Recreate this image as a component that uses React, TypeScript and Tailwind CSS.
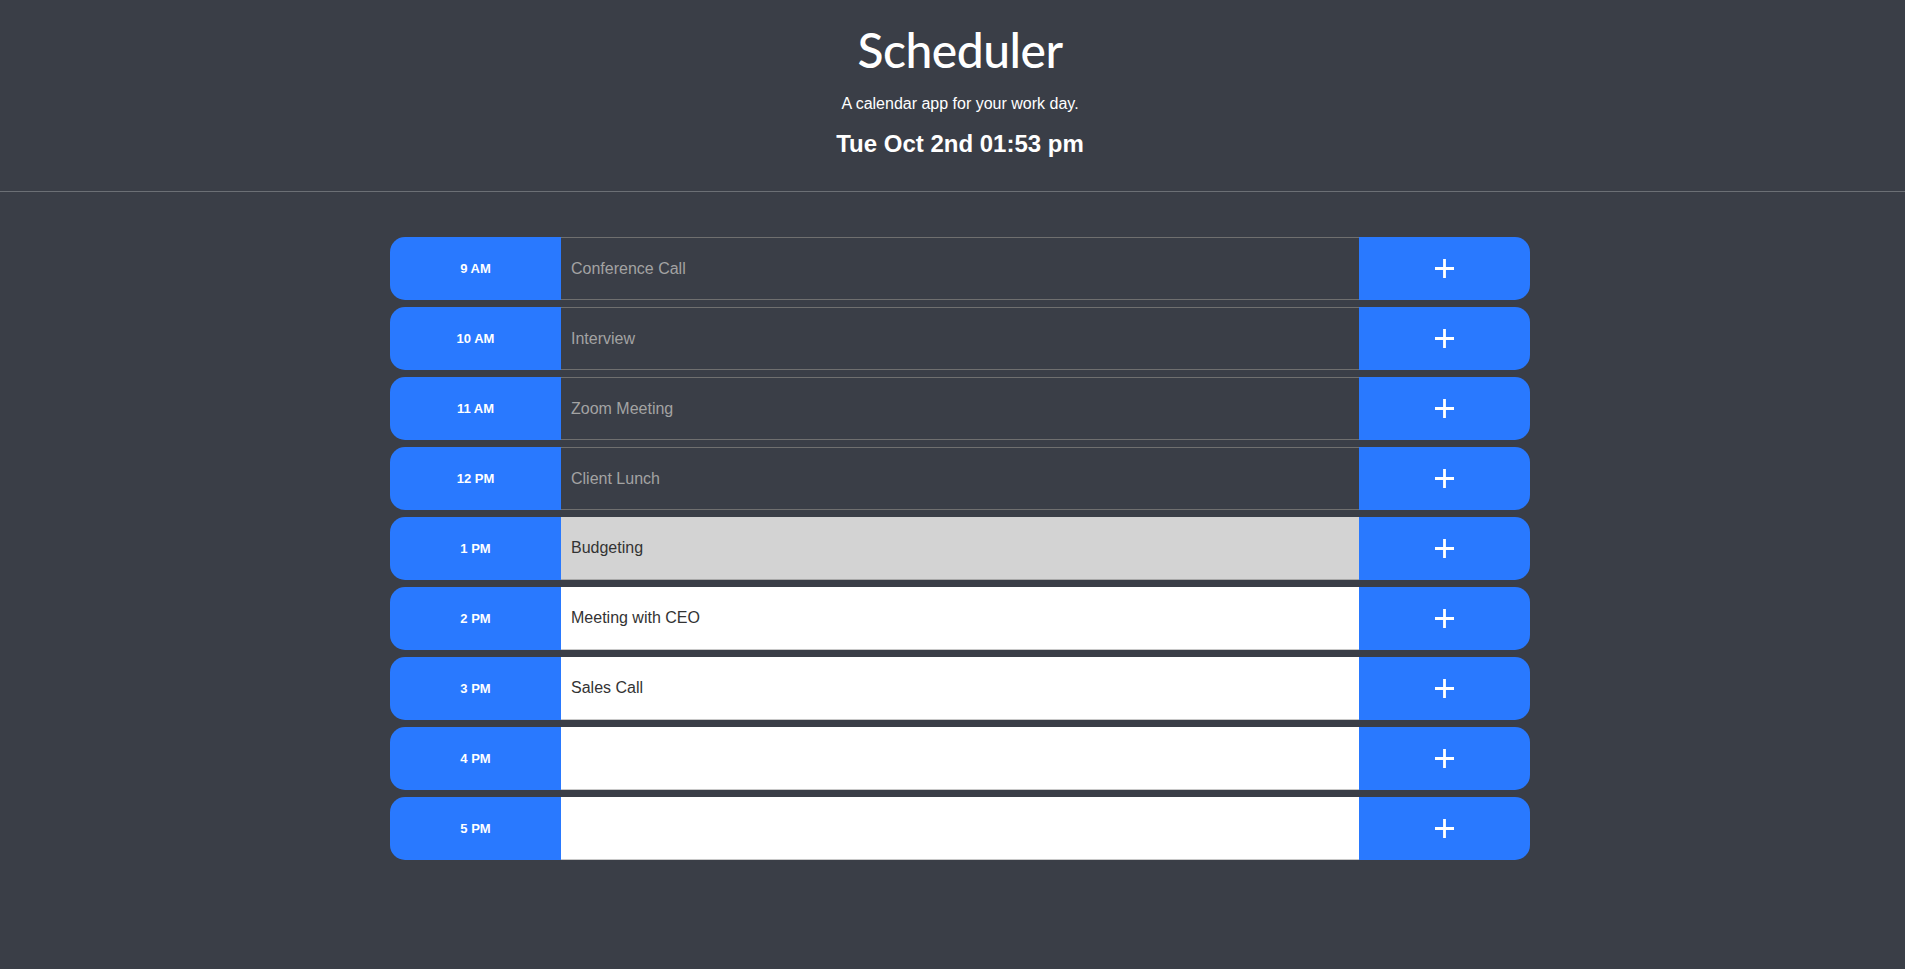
import React from "react";

type Hour = { label: string; text: string; status: "past" | "present" | "future" };

const hours: Hour[] = [
  { label: "9 AM", text: "Conference Call", status: "past" },
  { label: "10 AM", text: "Interview", status: "past" },
  { label: "11 AM", text: "Zoom Meeting", status: "past" },
  { label: "12 PM", text: "Client Lunch", status: "past" },
  { label: "1 PM", text: "Budgeting", status: "present" },
  { label: "2 PM", text: "Meeting with CEO", status: "future" },
  { label: "3 PM", text: "Sales Call", status: "future" },
  { label: "4 PM", text: "", status: "future" },
  { label: "5 PM", text: "", status: "future" },
];

const statusClass = {
  past: "bg-[#3a3e47] text-[#a3a3a3] border-y border-[#6f6f6f]",
  present: "bg-[#d3d3d3] text-[#333] border-b border-[#a8a8a8]",
  future: "bg-white text-[#333] border-b border-[#c8c8c8]",
};

const PlusIcon: React.FC = () => (
  <svg width="21" height="21" viewBox="0 0 21 21" fill="none">
    <path d="M10.5 1v19M1 10.5h19" stroke="white" strokeWidth="2.8" />
  </svg>
);

const App: React.FC = () => {
  return (
    <div className="min-h-[969px] bg-[#3a3e47] font-['Liberation_Sans',Arial,sans-serif] text-white">
      <header className="border-b border-[#6b6f75] pt-[20px] pb-[32px]">
        <div className="flex flex-col items-center pl-[15px]">
          <h1 className="text-[48px] leading-[60px] font-['Lato',sans-serif] font-medium tracking-[-0.5px]">
            Scheduler
          </h1>
          <p className="mt-[13px] text-[16px] leading-[22px]">A calendar app for your work day.</p>
          <p className="mt-[14px] text-[24px] leading-[30px] font-bold">Tue Oct 2nd 01:53 pm</p>
        </div>
      </header>
      <main className="pl-[15px] pt-[45px]">
        <div className="mx-auto flex w-[1140px] flex-col gap-[7px]">
          {hours.map((h) => (
            <div key={h.label} className="flex h-[63px]">
              <div className="flex w-[171px] items-center justify-center rounded-l-[15px] bg-[#2979ff] text-[13px] font-bold">
                {h.label}
              </div>
              <div className={`flex flex-1 items-center px-[10px] text-[16px] ${statusClass[h.status]}`}>
                {h.text}
              </div>
              <button className="flex w-[171px] items-center justify-center rounded-r-[15px] bg-[#2979ff]">
                <PlusIcon />
              </button>
            </div>
          ))}
        </div>
      </main>
    </div>
  );
};

export default App;
